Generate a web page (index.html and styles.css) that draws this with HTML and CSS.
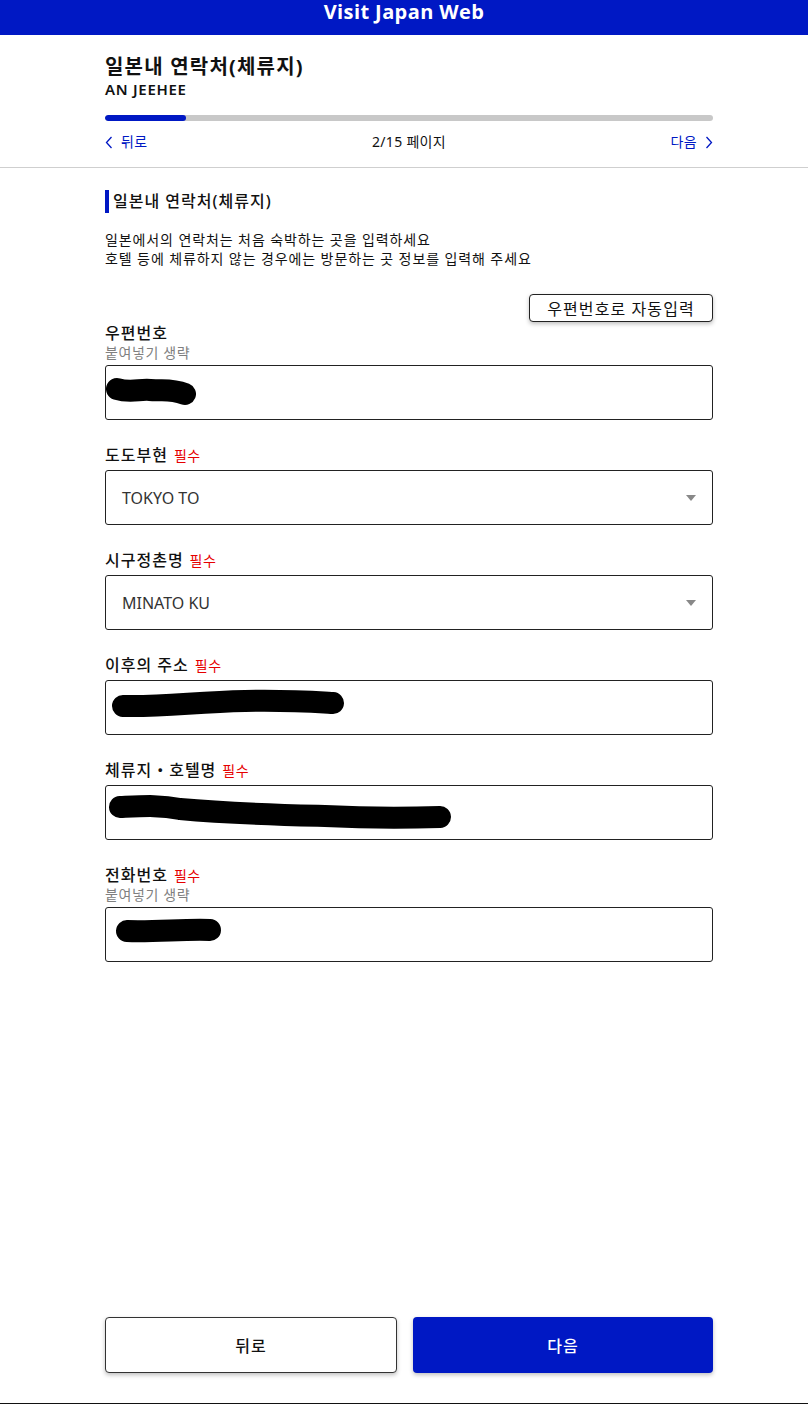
FILE: index.html
```html
<!DOCTYPE html>
<html lang="ko">
<head>
<meta charset="utf-8">
<title>Visit Japan Web</title>
<link rel="stylesheet" href="styles.css">
</head>
<body>
<div class="page">
  <header class="topbar">Visit Japan Web</header>

  <div class="head">
    <div class="wrap">
      <h1 class="title">일본내 연락처(체류지)</h1>
      <div class="name">AN JEEHEE</div>
      <div class="progress"><div class="progress-fill" style="width:13.3%"></div></div>
      <div class="pager">
        <a class="pager-link">
          <svg class="chev" width="8" height="13" viewBox="0 0 8 13"><path d="M6.5 1 L1.5 6.5 L6.5 12" fill="none" stroke="#0018c4" stroke-width="1.3"/></svg>
          뒤로
        </a>
        <span class="pager-count">2/15 페이지</span>
        <a class="pager-link">
          다음
          <svg class="chev" width="8" height="13" viewBox="0 0 8 13"><path d="M1.5 1 L6.5 6.5 L1.5 12" fill="none" stroke="#0018c4" stroke-width="1.3"/></svg>
        </a>
      </div>
    </div>
  </div>

  <main class="wrap form">
    <h2 class="section-title">일본내 연락처(체류지)</h2>
    <p class="desc">일본에서의 연락처는 처음 숙박하는 곳을 입력하세요<br>호텔 등에 체류하지 않는 경우에는 방문하는 곳 정보를 입력해 주세요</p>

    <div class="autofill-row"><button class="autofill">우편번호로 자동입력</button></div>

    <div class="field first">
      <div class="label">우편번호</div>
      <div class="hint">붙여넣기 생략</div>
      <div class="input">
        <svg class="redact" width="200" height="55" viewBox="0 0 200 55"><path d="M12 24 C25 28 35 24 45 25 C56 26 65 23 80 29" fill="none" stroke="#000" stroke-width="22" stroke-linecap="round"/></svg>
      </div>
    </div>

    <div class="field">
      <div class="label">도도부현 <span class="req">필수</span></div>
      <div class="input select"><span class="value">TOKYO TO</span><span class="caret"></span></div>
    </div>

    <div class="field">
      <div class="label">시구정촌명 <span class="req">필수</span></div>
      <div class="input select"><span class="value">MINATO KU</span><span class="caret"></span></div>
    </div>

    <div class="field">
      <div class="label">이후의 주소 <span class="req">필수</span></div>
      <div class="input">
        <svg class="redact" width="260" height="55" viewBox="0 0 260 55"><path d="M18 26 C60 27 90 22 140 21 C180 20 210 22 228 23" fill="none" stroke="#000" stroke-width="22" stroke-linecap="round"/></svg>
      </div>
    </div>

    <div class="field">
      <div class="label">체류지・호텔명 <span class="req">필수</span></div>
      <div class="input">
        <svg class="redact" width="360" height="55" viewBox="0 0 360 55"><path d="M15 22 C40 21 55 20 75 24 C130 29 180 30 220 31 C260 33 300 33 335 32" fill="none" stroke="#000" stroke-width="22" stroke-linecap="round"/></svg>
      </div>
    </div>

    <div class="field">
      <div class="label">전화번호 <span class="req">필수</span></div>
      <div class="hint">붙여넣기 생략</div>
      <div class="input">
        <svg class="redact" width="140" height="55" viewBox="0 0 140 55"><path d="M22 24 C50 25 80 22 105 23" fill="none" stroke="#000" stroke-width="22" stroke-linecap="round"/></svg>
      </div>
    </div>
  </main>

  <footer class="wrap actions">
    <button class="btn btn-back">뒤로</button>
    <button class="btn btn-next">다음</button>
  </footer>
</div>
</body>
</html>
```

FILE: styles.css
```css
* { box-sizing: border-box; }

html, body {
  margin: 0;
  padding: 0;
  background: #fff;
}

body {
  font-family: "Noto Sans", "Noto Sans CJK KR", sans-serif;
  color: #111;
}

.page {
  display: flex;
  flex-direction: column;
  min-height: 1404px;
  border-bottom: 1px solid #111;
}

.topbar {
  height: 35px;
  background: #0018c4;
  color: #fff;
  font-family: "Open Sans", "Noto Sans", sans-serif;
  font-weight: 700;
  font-size: 20px;
  line-height: 24px;
  text-align: center;
  letter-spacing: 0.4px;
}

.wrap {
  width: 608px;
  margin-left: 105px;
}

.head {
  border-bottom: 1px solid #cfcfcf;
  padding-top: 18px;
  padding-bottom: 15px;
}

.title {
  margin: 0;
  font-size: 20px;
  font-weight: 700;
  line-height: 28px;
  letter-spacing: 1.2px;
}

.name {
  font-size: 15px;
  font-weight: 600;
  line-height: 20px;
  margin-top: -2px;
  letter-spacing: 0.7px;
}

.progress {
  margin-top: 16px;
  height: 6px;
  border-radius: 3px;
  background: #c8c8c8;
  overflow: hidden;
}

.progress-fill {
  height: 100%;
  background: #0018c4;
  border-radius: 3px;
}

.pager {
  display: flex;
  justify-content: space-between;
  align-items: center;
  margin-top: 11px;
  font-size: 14px;
  line-height: 20px;
  letter-spacing: 0.3px;
}

.pager-link {
  color: #0018c4;
  display: flex;
  align-items: center;
  gap: 8px;
}

.pager-count {
  color: #111;
}

.chev { display: block; }

.form {
  padding-top: 22px;
}

.section-title {
  margin: 0;
  border-left: 4px solid #0018c4;
  padding-left: 4px;
  font-size: 16px;
  font-weight: 500;
  line-height: 23px;
  letter-spacing: 1px;
}

.desc {
  margin: 17px 0 0;
  font-size: 14px;
  line-height: 19px;
  letter-spacing: 0.9px;
}

.autofill-row {
  display: flex;
  justify-content: flex-end;
  margin-top: 26px;
}

.autofill {
  height: 28px;
  width: 184px;
  padding: 0;
  background: #fff;
  border: 1px solid #222;
  border-radius: 4px;
  box-shadow: 0 2px 4px rgba(0, 0, 0, 0.25);
  font-family: "Noto Sans", "Noto Sans CJK KR", sans-serif;
  font-size: 16px;
  letter-spacing: 1.1px;
  color: #111;
}

.field {
  margin-top: 24px;
}

.field.first {
  margin-top: 0;
}

.label {
  display: flex;
  align-items: baseline;
  gap: 6px;
  height: 22px;
  font-size: 16px;
  font-weight: 500;
  line-height: 22px;
  letter-spacing: 1px;
}

.req {
  color: #e60000;
  font-size: 14px;
  font-weight: 400;
  line-height: 22px;
  letter-spacing: 0.5px;
}

.hint {
  font-size: 14px;
  line-height: 18px;
  height: 18px;
  color: #808080;
  letter-spacing: 0.6px;
}

.input {
  margin-top: 4px;
  height: 55px;
  border: 1px solid #222;
  border-radius: 3px;
  display: flex;
  align-items: center;
  position: relative;
  overflow: hidden;
}

.hint + .input {
  margin-top: 3px;
}

.redact {
  position: absolute;
  left: -1px;
  top: -1px;
}

.select {
  padding: 0 16px;
  justify-content: space-between;
}

.value {
  font-size: 16px;
  color: #333;
}

.caret {
  width: 0;
  height: 0;
  border-left: 5.5px solid transparent;
  border-right: 5.5px solid transparent;
  border-top: 6px solid #888;
}

.actions {
  margin-top: auto;
  display: flex;
  gap: 16px;
  padding-bottom: 30px;
}

.btn {
  height: 56px;
  border-radius: 4px;
  font-family: "Noto Sans", "Noto Sans CJK KR", sans-serif;
  font-size: 16px;
  font-weight: 500;
  letter-spacing: 1px;
  box-shadow: 0 2px 4px rgba(0, 0, 0, 0.25);
}

.btn-back {
  width: 292px;
  background: #fff;
  border: 1px solid #333;
  color: #111;
}

.btn-next {
  flex: 1;
  background: #0018c4;
  border: none;
  color: #fff;
}
```
